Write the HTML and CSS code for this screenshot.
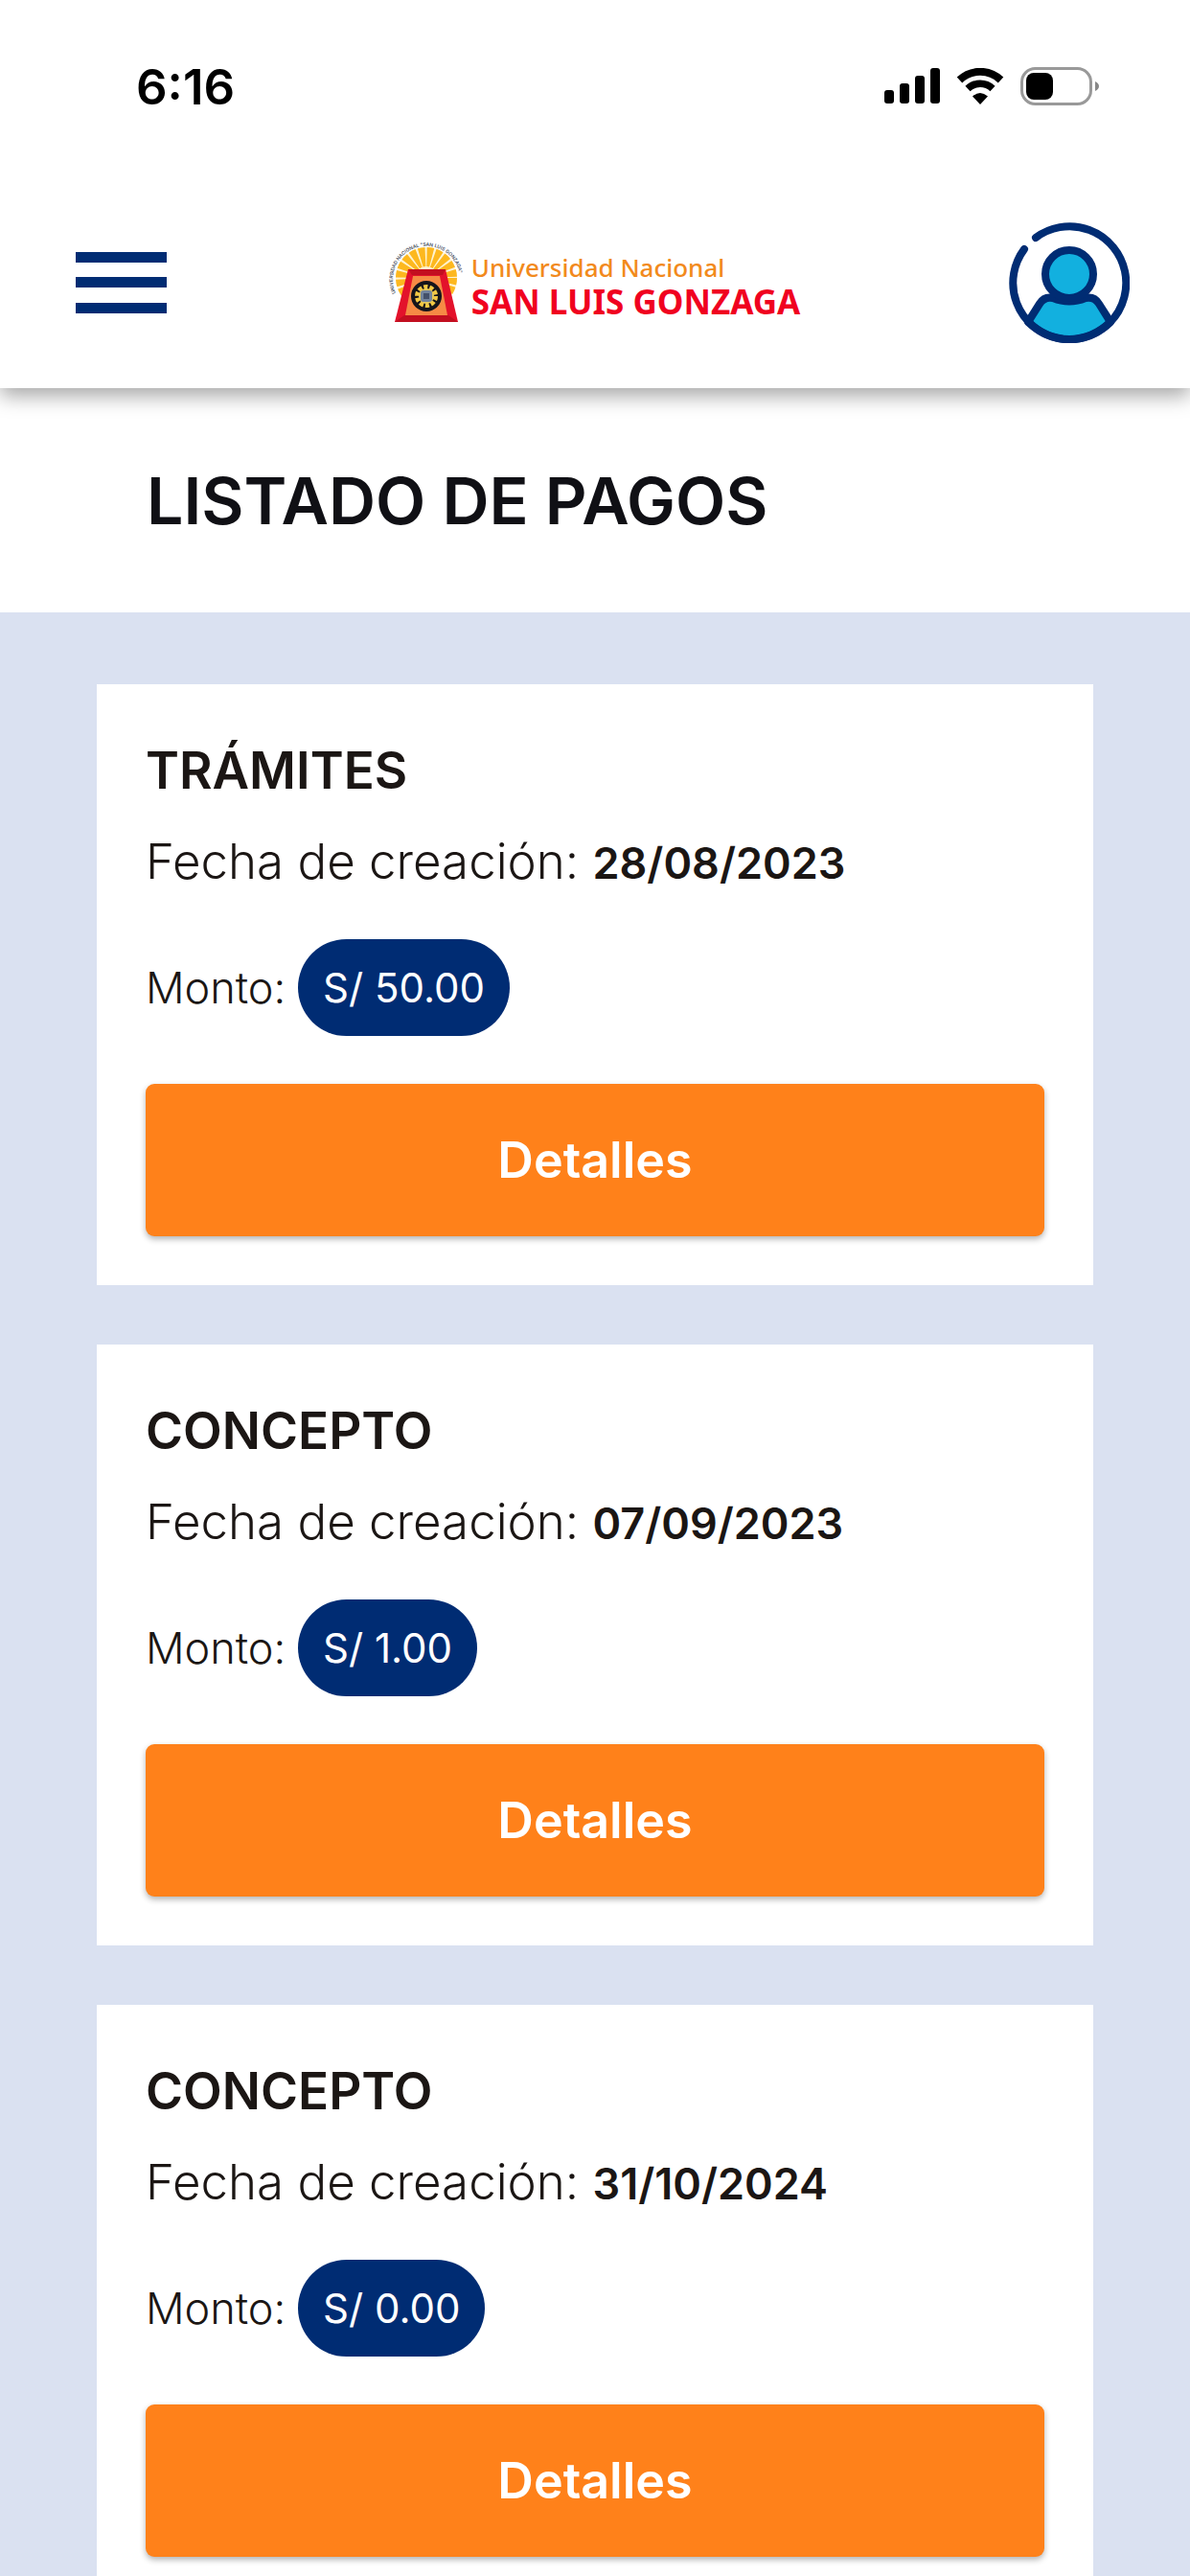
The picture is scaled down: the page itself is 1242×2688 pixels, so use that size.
FILE: index.html
```html
<!DOCTYPE html>
<html lang="es">
<head>
    <meta charset="UTF-8">
    <meta name="viewport" content="width=device-width, initial-scale=1.0">
    <title>Listado de pagos</title>
    <link rel="stylesheet" href="styles.css">
</head>
<body>
    <div class="app">
        <header class="header">
            <div class="status-bar">
                <span class="time">6:16</span>
                <div class="status-icons">
                    <svg width="58" height="38" viewBox="0 0 58 38">
                        <rect x="0" y="23" width="10" height="14" rx="3"/>
                        <rect x="16" y="16" width="10" height="21" rx="3"/>
                        <rect x="32" y="8" width="10" height="29" rx="3"/>
                        <rect x="48" y="0" width="10" height="37" rx="3"/>
                    </svg>
                    <svg width="50" height="38" viewBox="0 0 50 38">
                        <path d="M3.5 12.5 A31 31 0 0 1 46.5 12.5" fill="none" stroke="#000" stroke-width="8"/>
                        <path d="M12 21.5 A19 19 0 0 1 38 21.5" fill="none" stroke="#000" stroke-width="7.5"/>
                        <path d="M25 38 L17 29.5 Q25 22.5 33 29.5 Z"/>
                    </svg>
                    <svg width="83" height="40" viewBox="0 0 83 40">
                        <rect x="1.5" y="1.5" width="72" height="37" rx="14" fill="none" stroke="#999" stroke-width="3"/>
                        <rect x="6" y="6" width="28" height="28" rx="8"/>
                        <path d="M78 15 Q82 17 82 20 Q82 23 78 25 Z" fill="#888"/>
                    </svg>
                </div>
            </div>
            <div class="nav">
                <button class="icon-button" aria-label="Menú">
                    <svg width="95" height="64" viewBox="0 0 95 64" fill="#002c73">
                        <rect y="0" width="95" height="11"/>
                        <rect y="26" width="95" height="11"/>
                        <rect y="53" width="95" height="11"/>
                    </svg>
                </button>
                <div class="logo">
                    <svg width="80" height="86" viewBox="0 0 80 86">
                        <defs>
                            <path id="arc" d="M8 54 A35 35 0 1 1 72 54"/>
                        </defs>
                        <circle cx="40" cy="38" r="32" fill="#fff3cf"/>
                        <circle cx="40" cy="38" r="22" fill="none" stroke="#fdb81e" stroke-width="20" stroke-dasharray="5.3 1.6"/>
                        <text class="seal-text"><textPath href="#arc">UNIVERSIDAD NACIONAL "SAN LUIS GONZAGA"</textPath></text>
                        <path d="M21 29 H60 L73 84 H7 Z" fill="#e3122b"/>
                        <path d="M21 29 H60 L57 35 H25 Z" fill="#c20f20"/>
                        <path d="M7 84 L17 77 H63 L73 84 Z" fill="#c20f20"/>
                        <path d="M26 36 H54 L62 77 H18 Z" fill="#f68b45"/>
                        <circle cx="40" cy="57" r="16" fill="#15151b"/>
                        <circle cx="40" cy="57" r="9.5" fill="none" stroke="#f3c843" stroke-width="5" stroke-dasharray="4 1.97"/>
                        <circle cx="40" cy="57" r="8" fill="#e5c95c"/>
                        <rect x="34" y="51" width="12" height="12" rx="3" fill="#72839c"/>
                        <rect x="37" y="54" width="6" height="6" fill="#43506a"/>
                    </svg>
                    <div class="logo-text">
                        <span class="logo-top">Universidad Nacional</span>
                        <span class="logo-name">SAN LUIS GONZAGA</span>
                    </div>
                </div>
                <button class="icon-button" aria-label="Perfil">
                    <svg width="126" height="126" viewBox="0 0 126 126" fill="none" stroke="#002c73" stroke-width="8" stroke-linecap="round" stroke-linejoin="round">
                        <path d="M20 104 L32 85 Q37 77 46 79 Q63 86 80 79 Q89 77 94 85 L106 104 Q87 122 63 122 Q39 122 20 104 Z" fill="#12b0df"/>
                        <circle cx="63" cy="54" r="25" fill="#12b0df"/>
                        <path d="M28 16 A59 59 0 1 1 16 28"/>
                    </svg>
                </button>
            </div>
        </header>

        <div class="title-bar">
            <h1>LISTADO DE PAGOS</h1>
        </div>

        <main class="list">
            <section class="card">
                <h2>TRÁMITES</h2>
                <p class="date">Fecha de creación: <strong>28/08/2023</strong></p>
                <p class="amount">Monto: <span class="pill">S/ 50.00</span></p>
                <button class="details">Detalles</button>
            </section>
            <section class="card">
                <h2>CONCEPTO</h2>
                <p class="date">Fecha de creación: <strong>07/09/2023</strong></p>
                <p class="amount">Monto: <span class="pill">S/ 1.00</span></p>
                <button class="details">Detalles</button>
            </section>
            <section class="card">
                <h2>CONCEPTO</h2>
                <p class="date">Fecha de creación: <strong>31/10/2024</strong></p>
                <p class="amount">Monto: <span class="pill">S/ 0.00</span></p>
                <button class="details">Detalles</button>
            </section>
        </main>
    </div>
</body>
</html>
```
FILE: styles.css
```css
* {
    box-sizing: border-box;
}
body {
    font-family: Inter, "Liberation Sans", sans-serif;
    margin: 0;
    background-color: #fff;
    color: #1b1614;
}
h1, h2, p {
    margin: 0;
}
.app {
    display: flex;
    flex-direction: column;
    height: 100vh;
    overflow: hidden;
}

/* Header */
.header {
    position: relative;
    flex: none;
    background-color: #fff;
    box-shadow: 0 8px 20px rgba(0, 0, 0, 0.35);
}
.status-bar {
    display: flex;
    justify-content: space-between;
    align-items: center;
    height: 180px;
    padding: 0 94px 0 142px;
}
.time {
    font-size: 51px;
    font-weight: 600;
    color: #000;
}
.status-icons {
    display: flex;
    align-items: center;
    gap: 17px;
}
.nav {
    display: flex;
    justify-content: space-between;
    align-items: center;
    height: 225px;
    padding: 4px 63px 0 79px;
}
.icon-button {
    padding: 0;
    border: none;
    background: none;
    cursor: pointer;
}
.icon-button svg {
    display: block;
}
.logo {
    display: flex;
    align-items: center;
    gap: 7px;
    padding-left: 13px;
}
.logo svg {
    overflow: visible;
}
.logo-text {
    display: flex;
    flex-direction: column;
    padding-top: 4px;
    font-family: "Noto Sans", sans-serif;
}
.logo-top {
    font-size: 26px;
    line-height: 36px;
    font-weight: 500;
    color: #f28a1c;
}
.logo-name {
    font-size: 35px;
    line-height: 36px;
    font-weight: 700;
    color: #f0021f;
}
.seal-text {
    font-size: 5px;
    font-weight: 600;
    fill: #4a5263;
}

/* Title */
.title-bar {
    flex: none;
    padding: 72px 153px;
}
h1 {
    font-size: 68px;
    line-height: 90px;
    font-weight: 600;
    color: #101015;
}

/* Payments */
.list {
    flex: 1;
    overflow-y: auto;
    scrollbar-width: none;
    padding: 75px 101px;
    background-color: #dae1f1;
}
.card {
    padding: 51px;
    margin-bottom: 62px;
    background-color: #fff;
}
h2 {
    font-size: 53px;
    line-height: 78px;
    font-weight: 600;
}
.date {
    margin-top: 26px;
    font-size: 51px;
    line-height: 60px;
    font-weight: 300;
}
.date strong {
    font-size: 45px;
    line-height: 1;
    font-weight: 600;
}
.amount {
    display: flex;
    align-items: center;
    gap: 13px;
    margin-top: 51px;
    font-size: 45px;
    font-weight: 300;
}
.pill {
    padding: 0 26px;
    border-radius: 51px;
    line-height: 101px;
    font-size: 42px;
    font-weight: 400;
    color: #fff;
    background-color: #002c73;
}
.details {
    display: block;
    width: 100%;
    height: 159px;
    margin-top: 50px;
    border: none;
    border-radius: 9px;
    font-family: inherit;
    font-size: 52px;
    font-weight: 600;
    color: #fff;
    background-color: #ff811a;
    box-shadow: 0 3px 6px rgba(0, 0, 0, 0.3);
    cursor: pointer;
}
```
